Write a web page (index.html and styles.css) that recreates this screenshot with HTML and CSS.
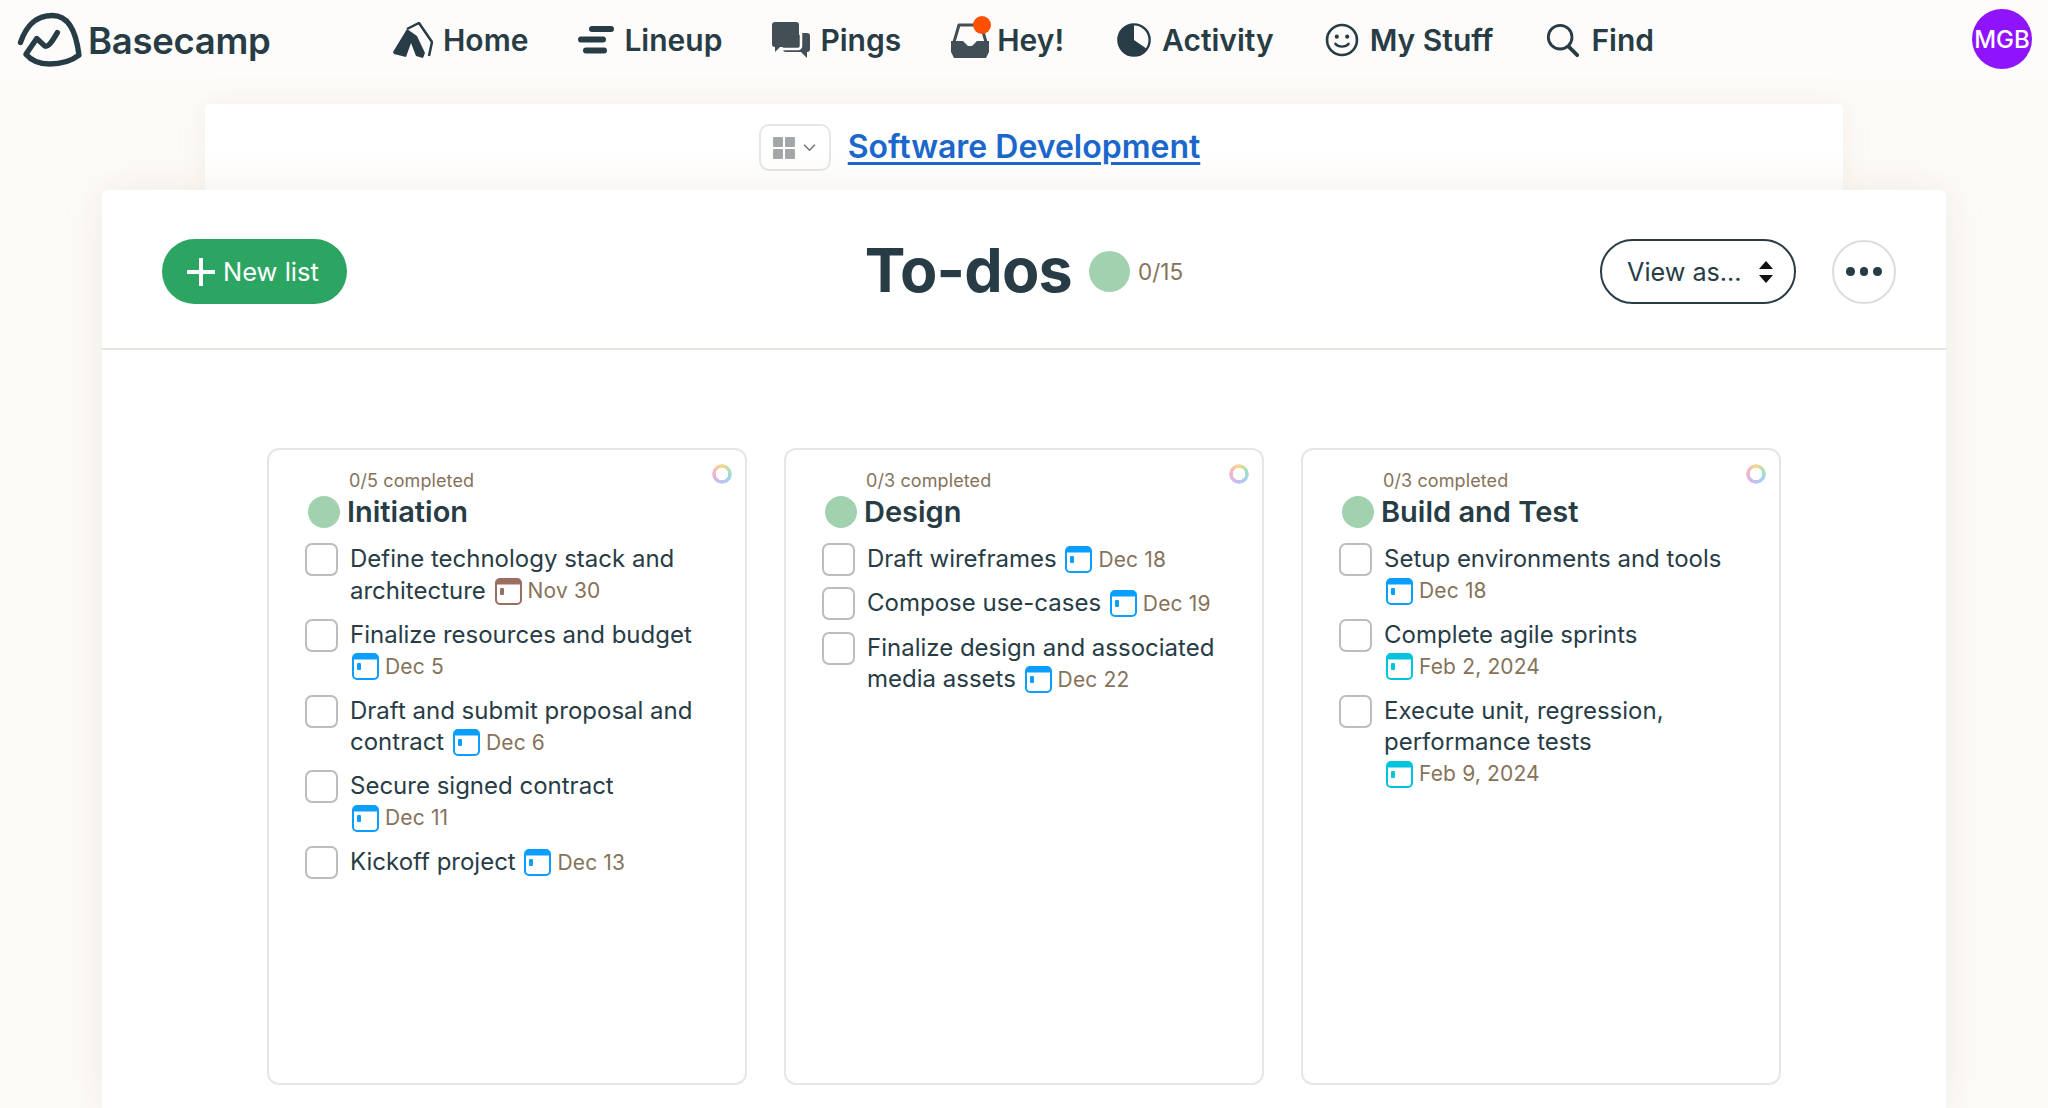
FILE: index.html
```html
<!DOCTYPE html>
<html lang="en">
<head>
<meta charset="utf-8">
<title>To-dos</title>
<link rel="stylesheet" href="styles.css">
</head>
<body>
<svg class="defs" width="0" height="0" aria-hidden="true">
  <symbol id="cal" viewBox="0 0 27 27">
    <rect x="1" y="1" width="25" height="25" rx="4" fill="none" stroke="currentColor" stroke-width="2"/>
    <path d="M1 6V5a4 4 0 0 1 4-4h17a4 4 0 0 1 4 4v1z" fill="currentColor" stroke="currentColor"/>
    <rect x="5" y="10" width="4" height="7" rx="1" fill="currentColor"/>
  </symbol>
</svg>
<header class="nav">
  <a class="logo">
    <svg class="logo-mark" viewBox="0 0 66 56"><path d="M3.500 31C8 18 16 3.500 36 3.500C52 3.500 60 18 63 44C54 51 44 53 33 53C24 53 15 50 9 43L20 27L28 34.500C31 36 34 33 41 21" fill="none" stroke="#283c46" stroke-width="5.500" stroke-linecap="round" stroke-linejoin="round"/></svg>
    <span class="logo-text">Basecamp</span>
  </a>
  <nav class="menu">
    <a class="item home">
      <svg class="ic ic-home" viewBox="0 0 40 36"><path d="M14 7L0 30L1 32L13 35L18 21L23 34L30 36L32 31L24 14z" fill="#283c46"/><path d="M14 7L26 1L39 20L36 34" fill="none" stroke="#283c46" stroke-width="2.500" stroke-linejoin="round"/></svg>
      <span>Home</span>
    </a>
    <a class="item lineup">
      <svg class="ic ic-lineup" viewBox="0 0 36 28"><g stroke="#283c46" stroke-width="6" stroke-linecap="round"><path d="M14 3H33M3 13.500H25M8 24.500H26"/></g></svg>
      <span>Lineup</span>
    </a>
    <a class="item pings">
      <svg class="ic ic-pings" viewBox="0 0 38 36"><path d="M3 0H24a3 3 0 0 1 3 3V22a3 3 0 0 1-3 3H8L3 30V25a3 3 0 0 1-3-3V3a3 3 0 0 1 3-3z" fill="#434f57"/><path d="M30 11H35a3 3 0 0 1 3 3V27a3 3 0 0 1-3 3V36L29 30H14a3 3 0 0 1-3-3V25" fill="#434f57"/><path d="M29 9V24a3 3 0 0 1-3 3H9" fill="none" stroke="#fefcfa" stroke-width="2.500"/></svg>
      <span>Pings</span>
    </a>
    <a class="item hey">
      <svg class="ic ic-hey" viewBox="0 0 38 36"><path d="M3 20L8 3H30L35 20" fill="none" stroke="#434f57" stroke-width="3" stroke-linejoin="round"/><path d="M0 19H12L17 24H21L26 19H38V30L35 36H3L0 30z" fill="#434f57"/></svg>
      <i class="badge"></i>
      <span>Hey!</span>
    </a>
    <a class="item activity">
      <svg class="ic ic-activity" viewBox="-1 -1 38 38"><circle cx="18" cy="18" r="16.500" fill="none" stroke="#283c46" stroke-width="2.500"/><path d="M18 2A16 16 0 1 0 31 27L18 18z" fill="#283c46"/></svg>
      <span>Activity</span>
    </a>
    <a class="item stuff">
      <svg class="ic ic-stuff" viewBox="-1 -1 38 38"><circle cx="18" cy="18" r="15.800" fill="none" stroke="#283c46" stroke-width="2.800"/><circle cx="12.500" cy="14.500" r="2.200" fill="#283c46"/><circle cx="23.500" cy="14.500" r="2.200" fill="#283c46"/><path d="M11 22C14 26 22 26 25 22" fill="none" stroke="#283c46" stroke-width="2.500" stroke-linecap="round"/></svg>
      <span>My Stuff</span>
    </a>
    <a class="item find">
      <svg class="ic ic-find" viewBox="-1 -1 38 38"><circle cx="15" cy="15" r="12.500" fill="none" stroke="#283c46" stroke-width="3"/><path d="M24 25L33 34" stroke="#283c46" stroke-width="4" stroke-linecap="round"/></svg>
      <span>Find</span>
    </a>
  </nav>
  <div class="avatar">MGB</div>
</header>

<section class="project">
  <button class="switcher">
    <svg class="grid-ic" viewBox="0 0 22 22"><g fill="#a3a7a9"><rect width="10" height="10" rx="1"/><rect x="12" width="10" height="10" rx="1"/><rect y="12" width="10" height="10" rx="1"/><rect x="12" y="12" width="10" height="10" rx="1"/></g></svg>
    <svg class="chev" viewBox="0 0 12 8"><path d="M1 1.500L6 6.500L11 1.500" fill="none" stroke="#70787c" stroke-width="1.500"/></svg>
  </button>
  <a class="project-link">Software Development</a>
</section>

<main class="card">
  <div class="card-head">
    <div class="head-left">
      <button class="new-list">
        <svg class="plus" viewBox="0 0 28 28"><path d="M14 1V27M1 14H27" stroke="#fff" stroke-width="4" stroke-linecap="round"/></svg>
        New list
      </button>
    </div>
    <div class="head-title">
      <h1>To-dos</h1>
      <i class="dot dot-big"></i>
      <span class="count">0/15</span>
    </div>
    <div class="head-right">
      <button class="view-as">View as…
        <svg class="updown" viewBox="0 0 14 22"><path d="M7 0L14 8H0zM7 22L0 14H14z" fill="#111"/></svg>
      </button>
      <button class="more"><i></i><i></i><i></i></button>
    </div>
  </div>

  <div class="lists">
    <article class="list">
      <i class="ring"></i>
      <p class="done">0/5 completed</p>
      <h2 class="list-title"><i class="dot"></i>Initiation</h2>
      <ul class="todos">
        <li><i class="check"></i><p>Define technology stack and architecture <span class="due past"><svg class="cal"><use href="#cal"/></svg>Nov 30</span></p></li>
        <li><i class="check"></i><p>Finalize resources and budget <span class="due"><svg class="cal"><use href="#cal"/></svg>Dec 5</span></p></li>
        <li><i class="check"></i><p>Draft and submit proposal and contract <span class="due"><svg class="cal"><use href="#cal"/></svg>Dec 6</span></p></li>
        <li><i class="check"></i><p>Secure signed contract <span class="due"><svg class="cal"><use href="#cal"/></svg>Dec 11</span></p></li>
        <li><i class="check"></i><p>Kickoff project <span class="due"><svg class="cal"><use href="#cal"/></svg>Dec 13</span></p></li>
      </ul>
    </article>
    <article class="list">
      <i class="ring"></i>
      <p class="done">0/3 completed</p>
      <h2 class="list-title"><i class="dot"></i>Design</h2>
      <ul class="todos">
        <li><i class="check"></i><p>Draft wireframes <span class="due"><svg class="cal"><use href="#cal"/></svg>Dec 18</span></p></li>
        <li><i class="check"></i><p>Compose use-cases <span class="due"><svg class="cal"><use href="#cal"/></svg>Dec 19</span></p></li>
        <li><i class="check"></i><p>Finalize design and associated media assets <span class="due"><svg class="cal"><use href="#cal"/></svg>Dec 22</span></p></li>
      </ul>
    </article>
    <article class="list">
      <i class="ring"></i>
      <p class="done">0/3 completed</p>
      <h2 class="list-title"><i class="dot"></i>Build and Test</h2>
      <ul class="todos">
        <li><i class="check"></i><p>Setup environments and tools <span class="due"><svg class="cal"><use href="#cal"/></svg>Dec 18</span></p></li>
        <li><i class="check"></i><p>Complete agile sprints <span class="due later"><svg class="cal"><use href="#cal"/></svg>Feb 2, 2024</span></p></li>
        <li><i class="check"></i><p>Execute unit, regression, performance tests <span class="due later"><svg class="cal"><use href="#cal"/></svg>Feb 9, 2024</span></p></li>
      </ul>
    </article>
  </div>
</main>
</body>
</html>
```
FILE: styles.css
```css
* { box-sizing: border-box; }
html, body { margin: 0; height: 1108px; overflow: hidden; }
body {
  background: #fdfbf8;
  color: #283c46;
  font-family: Inter, "Liberation Sans", sans-serif;
}
.defs { position: absolute; }
p, h1, h2, ul { margin: 0; padding: 0; }
i { display: block; }
button { font-family: inherit; background: none; padding: 0; cursor: pointer; }

.nav {
  height: 78px;
  display: flex;
  align-items: center;
  padding: 2px 16px 0 17px;
  background: #fefcfa;
}
.logo { display: flex; align-items: center; gap: 6px; width: 376px; margin-top: -2px; }
.logo-mark { width: 65px; height: 55px; }
.logo-text { font-size: 36.500px; font-weight: 600; letter-spacing: -0.3px; margin-top: 3px; }
.menu { display: flex; align-items: center; flex: 1; }
.item {
  display: flex;
  align-items: center;
  gap: 10px;
  font-size: 30px;
  font-weight: 600;
  position: relative;
  margin-right: 50px;
  white-space: nowrap;
}
.hey { gap: 8px; margin-right: 52px; }
.stuff { margin-right: 52px; }
.ic { display: block; margin-top: -1px; }
.ic-home { width: 40px; height: 36px; }
.ic-lineup { width: 36px; height: 28px; }
.ic-pings { width: 38px; height: 36px; }
.ic-hey { width: 38px; height: 36px; }
.ic-activity { width: 36px; height: 36px; }
.ic-stuff { width: 36px; height: 36px; }
.ic-find { width: 36px; height: 36px; }
.badge {
  position: absolute;
  left: 22px;
  top: -6px;
  width: 18px;
  height: 18px;
  border-radius: 50%;
  background: #fc5000;
}
.avatar {
  width: 60px;
  height: 60px;
  margin-top: -2px;
  border-radius: 50%;
  background: #9013fe;
  color: #fff;
  font-size: 24px;
  font-weight: 500;
  display: flex;
  align-items: center;
  justify-content: center;
  overflow: hidden;
}

.project {
  width: 1638px;
  height: 86px;
  margin: 26px auto 0;
  background: #fff;
  border-radius: 5px 5px 0 0;
  box-shadow: 0 0 30px rgba(160, 130, 90, 0.1);
  display: grid;
  grid-template-columns: 1fr auto 1fr;
  align-items: start;
  column-gap: 17px;
  padding-top: 20px;
}
.switcher {
  justify-self: end;
  width: 72px;
  height: 47px;
  border: 2px solid #e6e6e6;
  border-radius: 10px;
  display: flex;
  align-items: center;
  justify-content: center;
  gap: 8px;
}
.grid-ic { width: 22px; height: 22px; }
.chev { width: 13px; height: 9px; }
.project-link {
  color: #1b67cc;
  font-size: 32px;
  font-weight: 600;
  text-decoration: underline;
  text-decoration-thickness: 3px;
  text-underline-offset: 4px;
  line-height: 44px;
  margin-top: 1px;
}

.card {
  width: 1844px;
  height: 918px;
  margin: 0 auto;
  background: #fff;
  border-radius: 6px 6px 0 0;
  box-shadow: 0 0 40px rgba(160, 130, 90, 0.14);
  position: relative;
}
.card-head {
  display: grid;
  grid-template-columns: 1fr auto 1fr;
  align-items: center;
  padding: 49px 50px 44px;
  border-bottom: 2px solid #e8e5e0;
}
.head-left { padding-left: 10px; }
.new-list {
  width: 185px;
  height: 65px;
  border: 0;
  border-radius: 33px;
  background: #2da562;
  color: #fff;
  font-size: 25.500px;
  display: flex;
  align-items: center;
  gap: 8px;
  padding-left: 25px;
}
.plus { width: 28px; height: 28px; }
.head-title { display: flex; align-items: center; }
h1 { font-size: 61px; font-weight: 700; line-height: 65px; letter-spacing: -0.8px; margin-top: -2px; }
.dot { width: 32px; height: 32px; border-radius: 50%; background: #a2d1af; flex: none; }
.dot-big { width: 41px; height: 41px; margin: 0 8px 0 17px; }
.count { font-size: 22.500px; color: #86725a; }
.head-right { display: flex; justify-content: flex-end; align-items: center; gap: 36px; }
.view-as {
  width: 196px;
  height: 65px;
  border: 2px solid #283c46;
  border-radius: 33px;
  color: #283c46;
  font-size: 25.200px;
  display: flex;
  align-items: center;
  justify-content: space-between;
  padding: 0 21px 0 25px;
}
.updown { width: 14px; height: 22px; }
.more {
  width: 64px;
  height: 64px;
  border: 2px solid #dcdcdc;
  border-radius: 50%;
  display: flex;
  align-items: center;
  justify-content: center;
  gap: 5px;
}
.more i { width: 8.500px; height: 8.500px; border-radius: 50%; background: #283c46; }

.lists {
  display: grid;
  grid-template-columns: repeat(3, 480px);
  gap: 37px;
  justify-content: center;
  margin-top: 98px;
}
.list {
  position: relative;
  height: 637px;
  border: 2px solid #e6e6e6;
  border-radius: 12px;
  padding: 20px 0 0 36px;
}
.ring {
  position: absolute;
  right: 13px;
  top: 14px;
  width: 20px;
  height: 20px;
  border-radius: 50%;
  background: conic-gradient(#f6d98b, #a5e0c5, #a9cdf2, #d6b5ee, #f5b6c4, #f6d98b);
  -webkit-mask: radial-gradient(circle, transparent 6px, #000 6.500px);
  mask: radial-gradient(circle, transparent 6px, #000 6.500px);
}
.done { font-size: 18px; line-height: 22px; color: #86725a; margin-left: 44px; letter-spacing: 0.1px; }
.list-title {
  display: flex;
  align-items: center;
  gap: 7px;
  font-size: 29px;
  font-weight: 600;
  line-height: 34px;
  margin-left: 3px;
  margin-top: 3px;
}
.todos { list-style: none; margin-top: 14px; }
.todos li { display: flex; gap: 12px; margin-bottom: 12.800px; }
.check {
  flex: none;
  width: 33px;
  height: 33px;
  margin-bottom: -2px;
  border: 2.500px solid #bdbdbd;
  border-radius: 7px;
}
.todos p {
  width: 352px;
  font-size: 24px;
  line-height: 31.500px;
}
.due {
  display: inline-flex;
  align-items: center;
  gap: 6px;
  white-space: nowrap;
  color: #86725a;
  font-size: 21px;
  letter-spacing: 0.15px;
  line-height: 26px;
  height: 27px;
  vertical-align: -6px;
  margin-left: 2px;
}
.cal { width: 27px; height: 27px; color: #0a9eff; flex: none; }
.past .cal { color: #9b6f60; }
.later .cal { color: #00c3dd; }
```
